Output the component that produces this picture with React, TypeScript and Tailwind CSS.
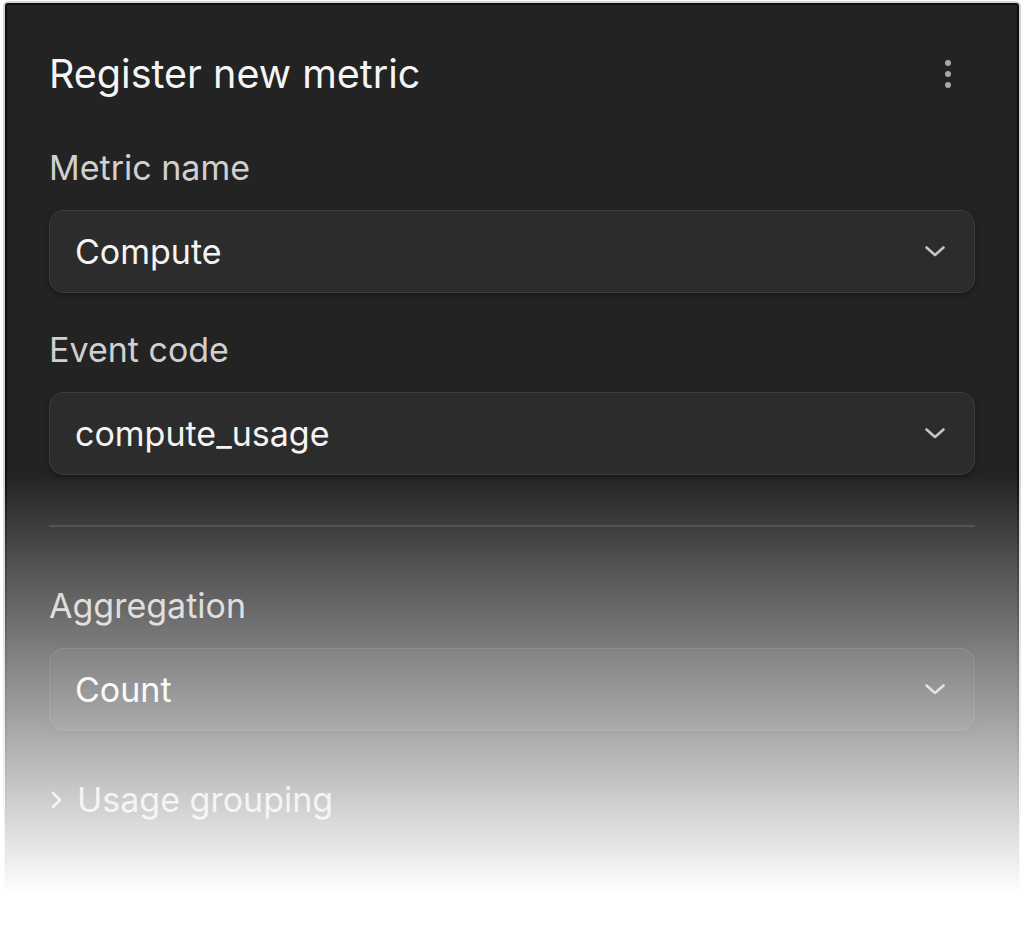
import React from "react";

function ChevronDown() {
  return (
    <svg width="24" height="24" viewBox="0 0 24 24" fill="none" stroke="currentColor" strokeWidth="2.6" strokeLinecap="round" strokeLinejoin="round">
      <path d="M3.5 7.5l8.5 7.5 8.5-7.5" />
    </svg>
  );
}

function Select({ value }: { value: string }) {
  return (
    <div className="flex h-[83px] items-center justify-between rounded-[14px] border border-[#3d3d3d] bg-[#2c2c2c] pl-[25px] pr-[27px] shadow-[0_2px_4px_rgba(0,0,0,0.35)]">
      <span className="text-[34px] leading-[40px] text-[#f4f4f4]">{value}</span>
      <span className="text-[#c4c4c4]">
        <ChevronDown />
      </span>
    </div>
  );
}

export default function App() {
  return (
    <div className="h-[933px] w-[1024px] overflow-hidden bg-white" style={{ fontFamily: "Inter, 'Noto Sans', sans-serif" }}>
      <div className="px-[5px] pt-[3px]">
        <div className="relative h-[920px] rounded-t-[3px] border-2 border-[#0e0e0e] bg-[#232323] shadow-[0_0_0_2px_#d4d4d4]">
          <div className="flex flex-col px-[42px] pt-[45px]">
            <div className="flex h-[48px] items-center justify-between">
              <h1 className="text-[39.5px] font-normal leading-[48px] text-[#f5f5f5]">Register new metric</h1>
              <div className="mr-[24px] flex flex-col items-center gap-[5px]">
                <span className="h-[6px] w-[6px] rounded-full bg-[#a8a8a8]" />
                <span className="h-[6px] w-[6px] rounded-full bg-[#a8a8a8]" />
                <span className="h-[6px] w-[6px] rounded-full bg-[#a8a8a8]" />
              </div>
            </div>

            <label className="mt-[50px] text-[34px] leading-[40px] text-[#d0d0d0]">Metric name</label>
            <div className="mt-[22px]">
              <Select value="Compute" />
            </div>

            <label className="mt-[37px] text-[34px] leading-[40px] text-[#d0d0d0]">Event code</label>
            <div className="mt-[22px]">
              <Select value="compute_usage" />
            </div>

            <div className="mt-[50px] h-[2px] bg-[#3c3c3c]" />

            <label className="mt-[59px] text-[34px] leading-[40px] text-[#d0d0d0]">Aggregation</label>
            <div className="mt-[22px]">
              <Select value="Count" />
            </div>

            <div className="mt-[49px] flex items-center gap-[14px] pl-[0px] text-[#d0d0d0]">
              <svg width="14" height="24" viewBox="0 0 14 24" fill="none" stroke="currentColor" strokeWidth="2.6" strokeLinecap="round" strokeLinejoin="round">
                <path d="M4 5l7 7-7 7" />
              </svg>
              <span className="text-[34px] leading-[40px]">Usage grouping</span>
            </div>
          </div>
          <div className="pointer-events-none absolute inset-x-[-4px] bottom-[-4px] top-[470px] bg-gradient-to-b from-[rgba(255,255,255,0)] via-[rgba(255,255,255,0.62)] via-[58%] to-white to-[93%]" />
        </div>
      </div>
    </div>
  );
}
